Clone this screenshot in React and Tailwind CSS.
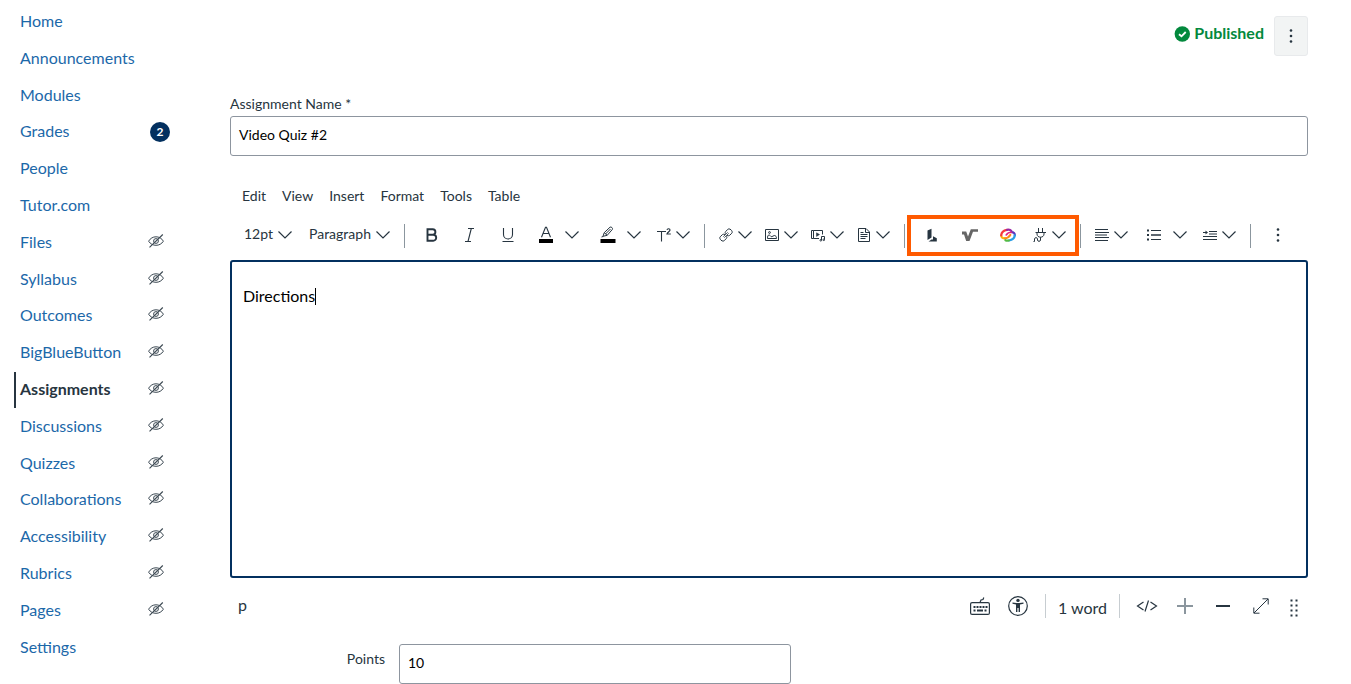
import React from 'react'
import clsx from 'clsx'

const courseLinks = [
  { label: 'Home' },
  { label: 'Announcements' },
  { label: 'Modules' },
  { label: 'Grades', badge: 2 },
  { label: 'People' },
  { label: 'Tutor.com' },
  { label: 'Files', hidden: true },
  { label: 'Syllabus', hidden: true },
  { label: 'Outcomes', hidden: true },
  { label: 'BigBlueButton', hidden: true },
  { label: 'Assignments', hidden: true, active: true },
  { label: 'Discussions', hidden: true },
  { label: 'Quizzes', hidden: true },
  { label: 'Collaborations', hidden: true },
  { label: 'Accessibility', hidden: true },
  { label: 'Rubrics', hidden: true },
  { label: 'Pages', hidden: true },
  { label: 'Settings' },
]

const menus = ['Edit', 'View', 'Insert', 'Format', 'Tools', 'Table']

function Icon({ w = 14, h = 14, className, children }) {
  return (
    <svg
      width={w}
      height={h}
      viewBox={`0 0 ${w} ${h}`}
      fill="none"
      stroke="currentColor"
      className={clsx('shrink-0', className)}
    >
      {children}
    </svg>
  )
}

function Chevron() {
  return (
    <Icon h={8}>
      <path d="M0.5 0.5L7 7L13.5 0.5" strokeWidth="1.2" />
    </Icon>
  )
}

function HiddenIcon() {
  return (
    <Icon w={16} h={14}>
      <path d="M0.6 7.2C2.4 4.2 5 2.8 8 2.8s5.6 1.4 7.4 4.4C13.6 10 11 11.3 8 11.3S2.4 10 0.6 7.2Z" />
      <circle cx="8" cy="7" r="2.4" />
      <path d="M1.5 13.4L14.8 0.5" strokeWidth="1.1" />
    </Icon>
  )
}

function Kebab({ h = 14 }) {
  return (
    <Icon w={4} h={h}>
      <g fill="currentColor" stroke="none">
        <circle cx="2" cy={h / 2 - 5.5} r="1.3" />
        <circle cx="2" cy={h / 2} r="1.3" />
        <circle cx="2" cy={h / 2 + 5.5} r="1.3" />
      </g>
    </Icon>
  )
}

function Divider({ className }) {
  return <div className={clsx('h-6 w-px shrink-0', className)} />
}

function MenuButton({ className, children }) {
  return (
    <button className={clsx('flex shrink-0 items-center gap-[5px]', className)}>
      {children}
      <Chevron />
    </button>
  )
}

function Tool({ children }) {
  return <button className="flex w-[38px] shrink-0 items-center justify-center">{children}</button>
}

function CourseNav() {
  return (
    <nav className="w-[230px] shrink-0 pt-[3.6px] pl-3.5">
      {courseLinks.map((link) => (
        <a
          key={link.label}
          className={clsx(
            'flex h-[36.8px] w-[156px] items-center justify-between text-base',
            link.active
              ? 'border-l-2 border-[#273540] pl-1 font-bold text-[#273540]'
              : 'pl-1.5 text-[#1c68a9]'
          )}
        >
          <span className="pb-0.5">{link.label}</span>
          {link.badge && (
            <span className="flex size-5 items-center justify-center rounded-full bg-[#03305f] pb-px text-xs font-bold text-white">
              {link.badge}
            </span>
          )}
          {link.hidden && (
            <span className="mr-1.5 pb-1 text-[#3b4852]">
              <HiddenIcon />
            </span>
          )}
        </a>
      ))}
    </nav>
  )
}

function Toolbar() {
  return (
    <div className="mt-2 flex h-10 items-center">
      <button className="ml-3.5 flex w-12 items-center justify-between text-sm">
        <span className="pb-0.5">12pt</span>
        <Chevron />
      </button>
      <button className="ml-[17px] flex w-[81px] items-center justify-between text-sm">
        <span className="pb-0.5">Paragraph</span>
        <Chevron />
      </button>
      <Divider className="mt-0.5 mr-2 ml-3.5 bg-[#8b969e]" />

      <Tool>
        <Icon>
          <path d="M2.5 1.3h5.2a2.7 2.7 0 0 1 0 5.4H2.5ZM2.5 6.7h5.7a3 3 0 0 1 0 6H2.5Z" strokeWidth="1.9" />
        </Icon>
      </Tool>
      <Tool>
        <Icon>
          <path d="M5 0.5h6M2 13.5h6M8.3 0.5L5 13.5" strokeWidth="1.1" />
        </Icon>
      </Tool>
      <Tool>
        <Icon>
          <path d="M2.5 0v6.5a4.5 4.5 0 0 0 9 0V0M1.5 13.5h11" strokeWidth="1.1" />
        </Icon>
      </Tool>
      <Tool>
        <Icon h={18}>
          <path d="M2.5 11.3L6.5 1.3h1L11.5 11.3M4 7.5h6" strokeWidth="1.1" />
          <path d="M0 13h14v4H0Z" fill="#000" stroke="none" />
        </Icon>
      </Tool>
      <Chevron />
      <div className="ml-2.5 flex items-center">
        <Tool>
          <Icon w={16} h={18}>
            <path d="M4.2 6.7L10 1.2c1-.9 3.3 1 2.3 2.3L7.2 9.3ZM4.2 6.7L3 10.3l4.2-1M5.5 8L10.5 3M3 10.5L1.5 11" />
            <path d="M0.5 13h15v4h-15Z" fill="#000" stroke="none" />
          </Icon>
        </Tool>
        <Chevron />
      </div>
      <MenuButton className="ml-4">
        <Icon>
          <path d="M0 3.5h9M4.5 3.5V13.5" strokeWidth="1.1" />
          <path d="M10 1.8c.3-1.5 3-1.4 3 0.2 0 1.3-2.4 2-3 4h3.8" strokeWidth="1.2" />
        </Icon>
      </MenuButton>
      <Divider className="mt-0.5 ml-3.5 bg-[#8b969e]" />

      <div className="ml-3.5 flex items-center gap-[13px]">
        <MenuButton>
          <Icon>
            <path d="M6 6.800C4.800 5.800 3.800 6.200 3 7L1.200 8.800c-1.600 1.600 1.900 5.600 4 3.900L7.300 10.500C8 9.800 8 9 7.500 8.200" />
            <path d="M8 7.200c1.200 1 2.200.6 3-.2l1.800-1.800c1.600-1.600-1.900-5.600-4-3.900L6.700 3.500C6 4.200 6 5 6.500 5.800" />
            <path d="M4.300 8.700l4.400-4.400M5.300 9.700l4.400-4.400" strokeWidth="0.8" />
          </Icon>
        </MenuButton>
        <MenuButton>
          <Icon>
            <path d="M0.5 1.5h13v11H0.5Z" />
            <path d="M2.5 10.5h9c0-2-.8-3-2.200-3-1.200 0-1.500 1.200-2.500 1.200C5.500 8.700 5.500 7 4 7 2.800 7 2.500 8.500 2.500 10.500Z" />
            <circle cx="4.5" cy="4.5" r="0.9" />
          </Icon>
        </MenuButton>
        <MenuButton>
          <Icon>
            <path d="M8 10.500h-5.500v-8h9v4M2.500 2.500h-2v8h2" />
            <path d="M5.500 4.800v3.600L8.500 6.500Z" fill="currentColor" strokeWidth="0.5" />
            <path d="M10.500 12V8.500h3v3" />
            <circle cx="9.800" cy="12.300" r="0.8" />
            <circle cx="12.800" cy="11.800" r="0.8" />
          </Icon>
        </MenuButton>
        <MenuButton>
          <Icon>
            <path d="M1.500 0.500h7.500L12.500 4v9.500h-11ZM8.500 0.500v4h4M3.500 4.500h3M3.500 6.500h7M3.500 8.500h7M3.500 10.500h5" />
          </Icon>
        </MenuButton>
      </div>
      <Divider className="mt-0.5 ml-3.5 bg-[#8b969e]" />

      {/* External apps */}
      <div className="ml-0.5 flex h-[41px] w-[172px] shrink-0 items-center self-start border-4 border-[#ff5a00] pb-px pl-0.5">
        <Tool>
          <Icon>
            <g fill="#273540" stroke="none">
              <path d="M2.500 2.500L6.500 0.800V9.500L2.500 12Z" />
              <path d="M3.500 13.400L7 11.200L8 11.800V8.300L11.800 10.200V13.500Z" />
            </g>
          </Icon>
        </Tool>
        <Tool>
          <Icon w={16}>
            <path d="M0 3.500h4.200L6 8.500L8.800 1.200H16V3.700H11L7.500 13H4.200L2 6.500H0Z" fill="#666" stroke="none" />
          </Icon>
        </Tool>
        <Tool>
          <Icon w={16}>
            <g strokeWidth="2.2" strokeLinecap="round">
              <path d="M5 10.300C2.600 10.300 1.100 9.200 1.200 7.300" stroke="#fbb40b" />
              <path d="M1.200 7.300C1.400 4.500 4 2.300 7 1.800" stroke="#f7373c" />
              <path d="M7 1.800c2-.3 3.600 0 4.300 1" stroke="#9829a5" />
              <path d="M5 10.300c2.500 0 4-1.300 5.300-3.300" stroke="#ff8a18" />
              <path d="M11.500 4.200c2.200 0 3.500 1.200 3.300 3.200" stroke="#5c35bb" />
              <path d="M14.800 7.400c-.3 2.600-2.900 4.600-5.800 5.100" stroke="#299ee5" />
              <path d="M9 12.500c-1.500.2-2.800.1-3.600-.3" stroke="#55bb45" />
              <path d="M6.200 7C7.300 5.200 9 4.200 11.500 4.200" stroke="#e6207e" strokeWidth="1.600" />
            </g>
          </Icon>
        </Tool>
        <MenuButton className="ml-1.5">
          <Icon>
            <path d="M5.500 0v4M9.500 0v4M2.500 4.500h10.500M4 4.500v1.500c0 2 1.500 3.200 3.500 3.200S11 8 11 6V4.500M7.500 9.200V12c0 1.800-3 1.800-3 0v-1.200c0-1.500-3-1.500-3 0v2.700H0.500" />
          </Icon>
        </MenuButton>
      </div>
      <Divider className="mt-0.5 ml-px bg-[#8b969e]" />

      <MenuButton className="ml-3.5">
        <Icon>
          <path d="M0 1.500h13M0 4.500h14M0 7h12M0 9.500h14M0 12.500h13" />
        </Icon>
      </MenuButton>
      <button className="ml-[19px] flex shrink-0 items-center gap-3">
        <Icon>
          <path d="M4 2.500h10M4 11.500h10" />
          <path d="M4 7h10" strokeWidth="1.5" />
          <path d="M0 2.500h2M0 7h2M0 11.500h2" strokeWidth="2" />
        </Icon>
        <Chevron />
      </button>
      <MenuButton className="ml-4">
        <Icon>
          <path d="M6 3.500h8M6 6h8M0 8.500h14M0 11.500h14M0 4.500h4" />
          <path d="M2.500 2.500L5 4.500L2.500 6.500Z" fill="currentColor" stroke="none" />
        </Icon>
      </MenuButton>
      <Divider className="mt-0.5 mr-[25px] ml-3.5 bg-[#8b969e]" />
      <Kebab />
    </div>
  )
}

function StatusBar() {
  return (
    <div className="flex h-14 items-center">
      <span className="ml-2 w-[732px] pb-0.5 text-base">p</span>
      <Icon w={20} h={20}>
        <rect x="0.6" y="6.6" width="18.8" height="11.8" rx="1.5" strokeWidth="1.2" />
        <path d="M10 6.5L11 4L13 3.5L13.8 1.5" strokeWidth="1.2" />
        <path d="M3.5 11h2m1 0h2m1 0h2m1 0h2m1 0h2M3.5 14.5h2m1.5 0h6m1.5 0h2" strokeWidth="2" />
      </Icon>
      <Icon w={20} h={20} className="ml-[18px]">
        <circle cx="10" cy="10" r="9.3" strokeWidth="1.2" />
        <circle cx="10" cy="4.4" r="1.7" fill="currentColor" stroke="none" />
        <path d="M4.5 6.5l4 .6h3l4-.6v1.3l-3.5.8V16h-1.4v-4H9.4v4H8V8.600l-3.500-.8Z" fill="currentColor" stroke="none" />
      </Icon>
      <Divider className="ml-[17px] bg-[#c7cdd1]" />
      <span className="ml-3 w-[49px] pt-1 text-base whitespace-nowrap">1 word</span>
      <Divider className="ml-3 bg-[#c7cdd1]" />
      <Icon w={22} h={12} className="ml-4">
        <path d="M7.5 2L1.5 6L7.5 10M14.5 2L20.5 6L14.5 10M12.5 0.5L9 11.5" strokeWidth="1.2" />
      </Icon>
      <Icon w={16} h={16} className="ml-[19px] text-[#8b969e]">
        <path d="M0 8h16M8 0v16" strokeWidth="2" />
      </Icon>
      <Icon h={16} className="ml-[23px]">
        <path d="M0 8h14" strokeWidth="2" />
      </Icon>
      <Icon w={16} h={16} className="ml-[23px]">
        <path d="M1 15L15 1M9.5 0.8h5.700v5.700M0.800 9.500v5.700h5.700" />
      </Icon>
      <Icon w={8} h={18} className="mt-1 ml-[21px]">
        <path d="M1.5 0.5v17M6.5 0.5v17" strokeWidth="2" strokeDasharray="2 3" />
      </Icon>
    </div>
  )
}

export default function App() {
  return (
    <div className="flex h-[684px] w-[1351px] overflow-hidden bg-white font-['Lato',sans-serif] text-[#273540]">
      <CourseNav />

      <main className="w-[1078px] shrink-0 pt-4">
        <header className="flex h-10 justify-end gap-2.5">
          <div className="flex h-9 items-center gap-1 text-base font-bold text-[#03893d]">
            <Icon w={16} h={16}>
              <circle cx="8.3" cy="8" r="7.7" fill="currentColor" stroke="none" />
              <path d="M5 8.2L7.5 10.3L11.7 6" stroke="#fff" strokeWidth="1.8" />
            </Icon>
            <span className="pb-[3px]">Published</span>
          </div>
          <button className="flex h-10 w-[34px] items-center justify-center rounded-[3px] border border-[#e8eaec] bg-[#f2f4f4]">
            <Kebab h={16} />
          </button>
        </header>

        <div className="mt-[38px] text-sm">
          <label className="block h-[22px] leading-5">Assignment Name *</label>
          <div className="flex h-10 items-center rounded-[3px] border border-[#8d959f] px-2 pb-0.5 text-black">
            Video Quiz #2
          </div>
        </div>

        <div className="mt-[29px] flex h-[22px] items-center gap-4 pl-3 text-sm">
          {menus.map((menu) => (
            <span key={menu}>{menu}</span>
          ))}
        </div>
        <Toolbar />

        <div className="mt-[5px] flex h-[318px] items-start rounded-[3px] border-2 border-[#03305f] px-[11px] pt-[22px] text-base text-black">
          Directions
          <span className="mt-1 h-[17px] w-px bg-black" />
        </div>
        <StatusBar />

        <div className="mt-[10px] flex text-sm">
          <label className="w-[155px] pt-[5px] text-right">Points</label>
          <div className="ml-3.5 flex h-10 w-[392px] items-center rounded-[3px] border border-[#8d959f] px-2 pb-0.5 text-black">
            10
          </div>
        </div>
      </main>
    </div>
  )
}
